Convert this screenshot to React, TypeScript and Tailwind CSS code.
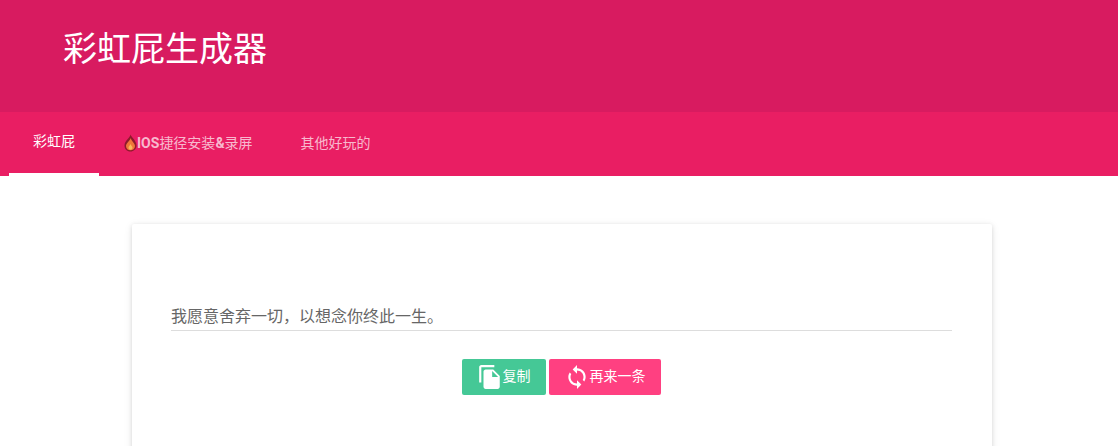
import { MdFileCopy, MdSync } from "react-icons/md"

const font = "font-['Roboto','Liberation_Sans','Noto_Sans_CJK_SC',sans-serif]"

function Flame() {
  return (
    <svg width="14" height="18" viewBox="0 0 14 18" className="shrink-0">
      <path d="M7.500 0.500C8 3 13.500 6.500 13.500 11.500C13.500 15 10.500 17.500 7.500 17.500C3.800 17.500 1.500 15 1.500 11.500C1.500 6.500 7 4 7.500 0.500Z" fill="#8e1a2c" />
      <path d="M7.800 4C8 7 12 9 12 12C12 14.800 9.800 16.300 7.500 16.300C5 16.300 3 14.800 3 12C3 9 7 7 7.800 4Z" fill="#f0763a" />
      <path d="M7.500 10C8 11.500 9.500 12.300 9.500 13.800C9.500 15.100 8.600 15.800 7.500 15.800C6.400 15.800 5.500 15.100 5.500 13.800C5.500 12.300 7 11.500 7.500 10Z" fill="#f9b95c" />
    </svg>
  )
}

export default function App() {
  return (
    <div className={`bg-white min-h-screen h-[446px] overflow-hidden ${font}`}>
      {/* Header */}
      <header className="bg-[#d81b60] h-[112px] pl-[63px] pt-[27px]">
        <h1 className="text-[34px] leading-[44px] text-white">彩虹屁生成器</h1>
      </header>

      {/* Tabs */}
      <nav className="bg-[#e91e63] h-[64px] pl-[9px] flex text-[14px]">
        <a className="px-6 h-[64px] flex items-center text-white border-b-[3px] border-white pb-[2px]">彩虹屁</a>
        <a className="px-6 h-[64px] flex items-center text-white/70 pb-[2px]">
          <Flame />
          <span><span className="font-bold">IOS</span>捷径安装<span className="font-bold">&amp;</span>录屏</span>
        </a>
        <a className="px-6 h-[64px] flex items-center text-white/70 pb-[2px]">其他好玩的</a>
      </nav>

      {/* Card */}
      <main className="pt-[48px] pl-[132px]">
        <section className="w-[860px] h-[260px] bg-white rounded-[2px] shadow-[0_1px_4px_rgba(0,0,0,0.12),0_2px_10px_rgba(0,0,0,0.08)] pl-[39px] pr-[40px] pt-[80px]">
          <div className="h-[27px] border-b border-[#ddd] text-[16px] leading-[26px] text-[#666]">
            我愿意舍弃一切，以想念你终此一生。
          </div>
          <div className="mt-[28px] flex justify-center gap-[3px] text-[14px] text-white pr-[1px]">
            <button className="w-[84px] h-[36px] bg-[#45c896] rounded-[2px] flex items-center justify-center">
              <MdFileCopy className="w-[26px] h-[26px] shrink-0" />
              <span className="pb-[2px]">复制</span>
            </button>
            <button className="w-[112px] h-[36px] bg-[#ff4081] rounded-[2px] flex items-center justify-center">
              <MdSync className="w-[26px] h-[26px] shrink-0" />
              <span className="pb-[2px]">再来一条</span>
            </button>
          </div>
        </section>
      </main>
    </div>
  )
}
